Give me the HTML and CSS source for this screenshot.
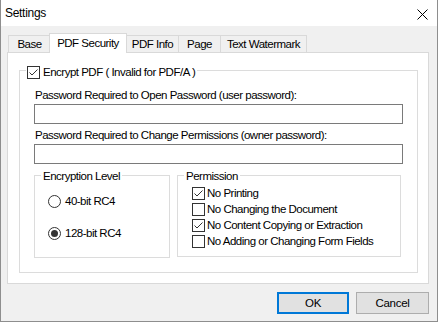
FILE: index.html
```html
<!DOCTYPE html>
<html>
<head>
<meta charset="utf-8">
<link rel="stylesheet" href="styles.css">
</head>
<body>
<div class="window">
  <div class="titlebar">
    <span class="title">Settings</span>
    <svg class="close" width="11" height="11" viewBox="0 0 11 11"><path d="M0.5 0.5 L10.5 10.5 M10.5 0.5 L0.5 10.5" stroke="#000" stroke-width="1" fill="none"/></svg>
  </div>
  <div class="body">
    <div class="tabs">
      <div class="tab t-base">Base</div>
      <div class="tab active t-sec">PDF Security</div>
      <div class="tab t-info">PDF Info</div>
      <div class="tab t-page">Page</div>
      <div class="tab t-wm">Text Watermark</div>
    </div>
    <div class="panel">
      <fieldset class="group main">
        <legend class="main-legend">
          <svg class="cb" width="13" height="13" viewBox="0 0 13 13"><rect x="0.5" y="0.5" width="12" height="12" fill="#fff" stroke="#333"/><path d="M2.5 6.5 L5 9 L10.5 3.5" stroke="#333" stroke-width="1" fill="none"/></svg>
          <span>Encrypt PDF ( Invalid for PDF/A )</span>
        </legend>
        <div class="field-label first">Password Required to Open Password (user password):</div>
        <div class="input"></div>
        <div class="field-label">Password Required to Change Permissions (owner password):</div>
        <div class="input"></div>
        <div class="subgroups">
          <fieldset class="group enc">
            <legend class="sub-legend">Encryption Level</legend>
            <div class="opt-row first-radio">
              <svg class="rd" width="13" height="13" viewBox="0 0 13 13"><circle cx="6.5" cy="6.5" r="6" fill="#fff" stroke="#333"/></svg>
              <span>40-bit RC4</span>
            </div>
            <div class="opt-row second-radio">
              <svg class="rd" width="13" height="13" viewBox="0 0 13 13"><circle cx="6.5" cy="6.5" r="6" fill="#fff" stroke="#333"/><circle cx="6.5" cy="6.5" r="3.5" fill="#333"/></svg>
              <span>128-bit RC4</span>
            </div>
          </fieldset>
          <fieldset class="group perm">
            <legend class="sub-legend">Permission</legend>
            <div class="opt-row chk first-chk">
              <svg class="cb" width="13" height="13" viewBox="0 0 13 13"><rect x="0.5" y="0.5" width="12" height="12" fill="#fff" stroke="#333"/><path d="M2.5 6.5 L5 9 L10.5 3.5" stroke="#333" stroke-width="1" fill="none"/></svg>
              <span>No Printing</span>
            </div>
            <div class="opt-row chk">
              <svg class="cb" width="13" height="13" viewBox="0 0 13 13"><rect x="0.5" y="0.5" width="12" height="12" fill="#fff" stroke="#333"/></svg>
              <span>No Changing the Document</span>
            </div>
            <div class="opt-row chk">
              <svg class="cb" width="13" height="13" viewBox="0 0 13 13"><rect x="0.5" y="0.5" width="12" height="12" fill="#fff" stroke="#333"/><path d="M2.5 6.5 L5 9 L10.5 3.5" stroke="#333" stroke-width="1" fill="none"/></svg>
              <span>No Content Copying or Extraction</span>
            </div>
            <div class="opt-row chk">
              <svg class="cb" width="13" height="13" viewBox="0 0 13 13"><rect x="0.5" y="0.5" width="12" height="12" fill="#fff" stroke="#333"/></svg>
              <span>No Adding or Changing Form Fields</span>
            </div>
          </fieldset>
        </div>
      </fieldset>
    </div>
    <div class="buttons">
      <button class="btn default">OK</button>
      <button class="btn cancel">Cancel</button>
    </div>
  </div>
</div>
</body>
</html>
```

FILE: styles.css
```css
html, body {
  margin: 0;
  padding: 0;
  background: #f0f0f0;
}

.window {
  width: 438px;
  height: 322px;
  box-sizing: border-box;
  border-left: 1px solid #8e8e8e;
  border-right: 1px solid #8e8e8e;
  border-bottom: 1px solid #8e8e8e;
  background: #f0f0f0;
  font-family: "Liberation Sans", Arial, sans-serif;
  font-size: 11.5px;
  letter-spacing: -0.5px;
  color: #000;
  display: flex;
  flex-direction: column;
}

.titlebar {
  height: 26px;
  background: #fff;
  display: flex;
  align-items: center;
  justify-content: space-between;
  padding: 0 9px 0 4px;
  box-sizing: border-box;
}

.title {
  font-size: 12px;
  letter-spacing: -0.3px;
}

.close {
  display: block;
  margin-top: 2px;
}

.body {
  padding: 7px 8px 0 6px;
}

.tabs {
  display: flex;
  align-items: flex-end;
  height: 19px;
  padding-left: 1px;
}

.tab {
  box-sizing: border-box;
  height: 17px;
  border: 1px solid #d9d9d9;
  border-bottom: none;
  background: #f0f0f0;
  text-align: center;
  line-height: 16px;
  margin-left: -1px;
  white-space: nowrap;
}

.t-base { width: 43px; margin-left: 0; }
.t-sec { width: 78px; }
.t-info { width: 53px; }
.t-page { width: 43px; }
.t-wm { width: 87px; }

.tab.active {
  height: 20px;
  margin-bottom: -1px;
  margin-left: -2px;
  background: #fff;
  position: relative;
  z-index: 1;
  line-height: 18px;
}

.panel {
  width: 422px;
  height: 232px;
  box-sizing: border-box;
  border: 1px solid #d9d9d9;
  background: #fff;
  padding: 8px 10px 0 11px;
}

.group {
  margin: 0;
  border: 1px solid #dcdcdc;
  min-inline-size: 0;
  box-sizing: border-box;
}

.main {
  padding: 0 14px;
  height: 212px;
}

.main-legend {
  margin-left: -8px;
  padding: 4px 2px 0 1px;
  display: flex;
  align-items: center;
  gap: 3px;
  height: 18px;
  box-sizing: border-box;
  line-height: 14px;
}

.cb, .rd {
  display: block;
  flex: none;
}

.field-label {
  line-height: 15px;
  padding-left: 1px;
  margin-top: 4px;
}

.field-label.first {
  margin-top: 9px;
}

.input {
  margin-top: 1px;
  height: 20px;
  box-sizing: border-box;
  border: 1px solid #7a7a7a;
  background: #fff;
}

.subgroups {
  display: flex;
  gap: 7px;
  margin-top: 3px;
}

.enc {
  width: 136px;
  height: 91px;
  padding: 0 0 0 13px;
}

.perm {
  width: 224px;
  height: 90px;
  padding: 0 0 0 14px;
}

.sub-legend {
  margin-left: -7px;
  padding: 2px 2px 0 2px;
  line-height: 14px;
}

.perm .sub-legend {
  margin-left: -8px;
}

.opt-row {
  display: flex;
  align-items: center;
  height: 16px;
  gap: 4px;
  white-space: nowrap;
}

.first-radio {
  margin-top: 10px;
}

.second-radio {
  margin-top: 16px;
}

.chk {
  gap: 2px;
}

.first-chk {
  margin-top: 2px;
}

.buttons {
  display: flex;
  justify-content: flex-end;
  gap: 7px;
  margin-top: 8px;
}

.btn {
  height: 22px;
  box-sizing: border-box;
  background: #e1e1e1;
  border: 1px solid #adadad;
  font-family: "Liberation Sans", Arial, sans-serif;
  font-size: 11.5px;
  letter-spacing: -0.3px;
  color: #000;
  padding: 0;
  margin: 0;
}

.btn.default {
  width: 72px;
  border: 2px solid #0078d7;
}

.btn.cancel {
  width: 73px;
}
```
